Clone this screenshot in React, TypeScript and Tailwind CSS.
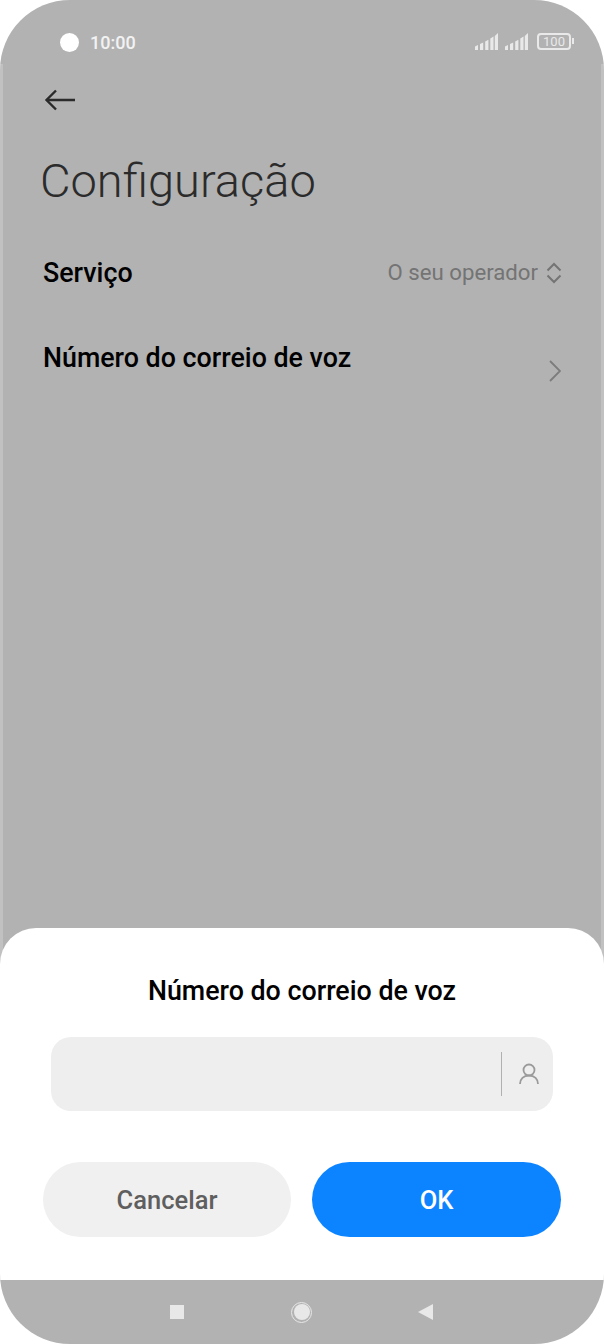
function SignalBars() {
  return (
    <svg width="23" height="17" viewBox="0 0 23 17" fill="#e9e9e9">
      <path d="M0 13.500 3 12v5H0z" />
      <path d="M5 11l3.200-1.500V17H5z" />
      <path d="M10.200 8.500l3.200-1.800V17h-3.200z" />
      <path d="M15.300 5.500l3.200-2V17h-3.200z" />
      <path d="M19.800 3 23 0v17h-3.200z" />
    </svg>
  )
}

export default function App() {
  return (
    <div className="w-[604px] h-[1344px] bg-white font-['Roboto',sans-serif]">
      <div className="relative h-full flex flex-col bg-[#b2b2b2] rounded-[70px] overflow-hidden">
        {/* Side edges of the device frame */}
        <div className="absolute left-0 top-[64px] bottom-[64px] w-[3px] bg-white/20" />
        <div className="absolute right-0 top-[64px] bottom-[64px] w-[3px] bg-white/20" />

        {/* Status bar */}
        <div className="flex items-center justify-between h-[84px] pl-[60px] pr-[30px] shrink-0">
          <div className="flex items-center gap-[11px]">
            <div className="w-[19px] h-[19px] rounded-full bg-white" />
            <span className="text-[18px] font-medium text-[#f2f2f2]">10:00</span>
          </div>
          <div className="flex items-center gap-[7px] -mt-[2px]">
            <SignalBars />
            <SignalBars />
            <div className="flex items-center gap-[1px] ml-[2px]">
              <div className="w-[34px] h-[17px] rounded-[4px] border-2 border-[#e9e9e9] flex items-center justify-center text-[13px] leading-none text-[#e9e9e9]">
                100
              </div>
              <div className="w-[2px] h-[6px] bg-[#e9e9e9]" />
            </div>
          </div>
        </div>

        {/* Back arrow */}
        <div className="h-[32px] pl-[44px] pt-[5px] shrink-0">
          <svg width="32" height="22" viewBox="0 0 32 22" fill="none" stroke="#2b2b2b" strokeWidth="2.4">
            <path d="M31 11H3" />
            <path d="M12 1.500 2.500 11 12 20.500" />
          </svg>
        </div>

        {/* Title */}
        <h1 className="pl-[40px] mt-[35px] text-[47px] leading-[60px] font-light text-[#2b2b2b] shrink-0">Configuração</h1>

        {/* Rows */}
        <div className="flex items-center justify-between pl-[43px] pr-[42px] mt-[32px] h-[60px] shrink-0">
          <span className="text-[26.800px] font-medium text-black">Serviço</span>
          <div className="flex items-center gap-[8px] text-[#747474]">
            <span className="text-[22.200px]">O seu operador</span>
            <svg width="16" height="22" viewBox="0 0 16 22" fill="none" stroke="#747474" strokeWidth="2">
              <path d="M1.500 8.500 8 2l6.500 6.500" />
              <path d="M1.500 13.500 8 20l6.500-6.500" />
            </svg>
          </div>
        </div>
        <div className="flex items-start justify-between pl-[43px] pr-[43px] mt-[35px] shrink-0">
          <span className="text-[26.800px] leading-[40px] font-medium text-black">Número do correio de voz</span>
          <svg width="12" height="22" viewBox="0 0 12 22" fill="none" stroke="#7c7c7c" strokeWidth="1.800" className="mt-[22px]">
            <path d="M1 1l10 10L1 21" />
          </svg>
        </div>

        <div className="flex-1" />

        {/* Dialog */}
        <div className="bg-white rounded-t-[36px] h-[352px] shrink-0 flex flex-col">
          <h2 className="mt-[45px] text-center text-[26.800px] leading-[36px] font-medium text-black">Número do correio de voz</h2>
          <div className="mt-[28px] mx-[51px] h-[74px] rounded-[20px] bg-[#eeeeee] flex items-center justify-end">
            <div className="w-px h-[44px] bg-[#b0b0b0]" />
            <div className="w-[51px] flex justify-center pl-[2px]">
              <svg width="20" height="22" viewBox="0 0 20 22" fill="none" stroke="#9a9a9a" strokeWidth="1.800">
                <circle cx="10" cy="7" r="5.500" />
                <path d="M1 21c0-5 3.500-8.500 9-8.500s9 3.500 9 8.500" />
              </svg>
            </div>
          </div>
          <div className="mt-[51px] mx-[43px] flex gap-[21px]">
            <button className="w-[248px] h-[75px] pt-[2px] rounded-full bg-[#f0f0f0] text-[25.500px] font-medium text-[#5f5f5f]">Cancelar</button>
            <button className="w-[249px] h-[75px] pt-[2px] rounded-full bg-[#0d84ff] text-[25.500px] font-medium text-white">OK</button>
          </div>
        </div>

        {/* Nav bar */}
        <div className="h-[64px] flex items-center shrink-0 pl-[170px] gap-[107px]">
          <div className="w-[14px] h-[14px] bg-[#e8e8e8]" />
          <div className="w-[21px] h-[21px] rounded-full border border-[#e8e8e8] flex items-center justify-center">
            <div className="w-[16px] h-[16px] rounded-full bg-[#e8e8e8]" />
          </div>
          <svg width="15" height="16" viewBox="0 0 15 16" fill="#e8e8e8" className="-ml-[1px]">
            <path d="M15 0v16L0 8z" />
          </svg>
        </div>
      </div>
    </div>
  )
}
